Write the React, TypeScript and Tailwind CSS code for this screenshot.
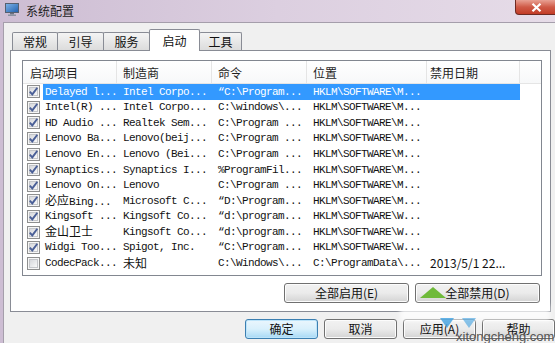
import React from 'react';

type Row = { on: boolean; name: string; maker: string; cmd: string; loc: string; date?: string };

const rows: Row[] = [
  { on: true, name: 'Delayed l...', maker: 'Intel Corpo...', cmd: '“C:\\Program...', loc: 'HKLM\\SOFTWARE\\M...' },
  { on: true, name: 'Intel(R) ...', maker: 'Intel Corpo...', cmd: 'C:\\windows\\...', loc: 'HKLM\\SOFTWARE\\M...' },
  { on: true, name: 'HD Audio ...', maker: 'Realtek Sem...', cmd: 'C:\\Program ...', loc: 'HKLM\\SOFTWARE\\M...' },
  { on: true, name: 'Lenovo Ba...', maker: 'Lenovo(beij...', cmd: 'C:\\Program ...', loc: 'HKLM\\SOFTWARE\\M...' },
  { on: true, name: 'Lenovo En...', maker: 'Lenovo (Bei...', cmd: 'C:\\Program ...', loc: 'HKLM\\SOFTWARE\\M...' },
  { on: true, name: 'Synaptics...', maker: 'Synaptics I...', cmd: '%ProgramFil...', loc: 'HKLM\\SOFTWARE\\M...' },
  { on: true, name: 'Lenovo On...', maker: 'Lenovo', cmd: 'C:\\Program ...', loc: 'HKLM\\SOFTWARE\\M...' },
  { on: true, name: '必应Bing...', maker: 'Microsoft C...', cmd: '“D:\\Program...', loc: 'HKLM\\SOFTWARE\\M...' },
  { on: true, name: 'Kingsoft ...', maker: 'Kingsoft Co...', cmd: '“d:\\program...', loc: 'HKLM\\SOFTWARE\\W...' },
  { on: true, name: '金山卫士', maker: 'Kingsoft Co...', cmd: '“d:\\program...', loc: 'HKLM\\SOFTWARE\\W...' },
  { on: true, name: 'Widgi Too...', maker: 'Spigot, Inc.', cmd: '“C:\\Program...', loc: 'HKLM\\SOFTWARE\\W...' },
  { on: false, name: 'CodecPack...', maker: '未知', cmd: 'C:\\Windows\\...', loc: 'C:\\ProgramData\\...', date: '2013/5/1 22...' },
];

const cjk = "font-['Noto_Sans_CJK_SC',sans-serif]";

// chinese runs get a CJK font at full size, latin stays half-width mono
function Txt({ s }: { s: string }) {
  const parts = s.split(/([\u4e00-\u9fff]+)/).filter(Boolean);
  return (
    <>
      {parts.map((p, i) =>
        /[\u4e00-\u9fff]/.test(p) ? (
          <span key={i} className={`${cjk} text-[12px] tracking-normal`}>{p}</span>
        ) : (
          <span key={i}>{p}</span>
        )
      )}
    </>
  );
}

function Check({ on }: { on: boolean }) {
  return (
    <svg width="13" height="13" viewBox="0 0 13 13">
      <defs>
        <linearGradient id="cb" x1="0" y1="0" x2="1" y2="1">
          <stop offset="0" stopColor="#d4d6da" />
          <stop offset="1" stopColor="#fbfbfb" />
        </linearGradient>
      </defs>
      <rect x="0.5" y="0.5" width="12" height="12" fill="#f6f6f6" stroke="#8e8f8f" />
      <rect x="2.5" y="2.5" width="8" height="8" fill="url(#cb)" stroke="#c4c6ca" />
      {on && <path d="M2.8 6.6 L5.3 9.4 L10.3 2.8" fill="none" stroke="#4a5f97" strokeWidth="1.9" />}
    </svg>
  );
}

function Btn({ label, w, primary }: { label: string; w: string; primary?: boolean }) {
  return (
    <div
      className={`${w} h-[20px] rounded-[3px] border flex items-center justify-center text-[12px] text-[#111] ${cjk} ${
        primary
          ? 'border-[#3c7fb1] bg-gradient-to-b from-[#eaf6fd] via-[#d9f0fc] to-[#a7d9f5] shadow-[inset_0_0_0_1px_#bde4fa]'
          : 'border-[#707070] bg-gradient-to-b from-[#f2f2f2] via-[#ebebeb] to-[#d3d3d3] shadow-[inset_0_0_0_1px_#fcfcfc]'
      }`}
    >
      {label}
    </div>
  );
}

const tabs = [
  { t: '常规', w: 'w-[46px]' },
  { t: '引导', w: 'w-[47px]' },
  { t: '服务', w: 'w-[47px]' },
  { t: '启动', w: 'w-[51px]', on: true },
  { t: '工具', w: 'w-[43px]' },
];

export default function App() {
  return (
    <div className="w-[555px] h-[343px] overflow-hidden relative flex flex-col bg-gradient-to-r from-[#cdbdd3] via-[#dccfe0] to-[#e6dce8]">
      {/* title bar */}
      <div className="h-[22px] shrink-0 flex items-start">
        <svg className="mt-[3px] ml-[5px]" width="14" height="13" viewBox="0 0 14 13">
          <defs>
            <linearGradient id="scr" x1="0" y1="0" x2="1" y2="1">
              <stop offset="0" stopColor="#7fb4e8" />
              <stop offset="1" stopColor="#1f5fae" />
            </linearGradient>
          </defs>
          <rect x="0.5" y="0.5" width="13" height="9" fill="url(#scr)" stroke="#556070" />
          <rect x="5" y="10" width="4" height="1.5" fill="#6a7280" />
          <rect x="3" y="11.5" width="8" height="1.5" fill="#8a92a0" />
        </svg>
        <div className={`ml-[7px] mt-[3px] text-[12px] leading-[16px] text-[#1e1e1e] ${cjk}`}>系统配置</div>
        <div className="ml-auto -mr-[3px] w-[43px] h-[15px] rounded-bl-[4px] border border-t-0 border-[#6e2a22] bg-gradient-to-b from-[#e8a093] via-[#cf5a47] to-[#c23b26] flex items-center justify-center">
          <svg width="11" height="9" viewBox="0 0 11 9">
            <path d="M1.5 0.8 L9.5 8.2 M9.5 0.8 L1.5 8.2" stroke="#fff" strokeWidth="2.2" />
          </svg>
        </div>
      </div>

      {/* body */}
      <div className="flex-1 ml-[3px] bg-[#f0f0f0] border-l border-t border-[#a59eab] flex flex-col">
        <div className="h-[28px] flex items-end pl-[8px] relative z-10">
          {tabs.map((tab, i) =>
            tab.on ? (
              <div
                key={i}
                className={`${tab.w} h-[22px] -ml-px border border-b-0 border-[#898c95] bg-white rounded-t-[2px] flex justify-center pt-[3px] text-[12px] leading-[16px] text-[#111] ${cjk}`}
              >
                {tab.t}
              </div>
            ) : (
              <div
                key={i}
                className={`${tab.w} h-[18px] mb-px ${i > 0 ? '-ml-px' : ''} border border-b-0 border-[#898c95] bg-gradient-to-b from-[#f4f4f4] to-[#dcdcdc] rounded-t-[2px] flex justify-center pt-[1px] text-[12px] leading-[16px] text-[#111] ${cjk}`}
              >
                {tab.t}
              </div>
            )
          )}
        </div>

        <div className="ml-[6px] -mt-px w-[541px] h-[262px] border border-[#898c95] bg-white flex flex-col">
          {/* list */}
          <div className="ml-[11px] mt-[9px] w-[520px] h-[216px] border border-[#828790] bg-white flex flex-col">
            <div className={`h-[23px] flex text-[12px] text-[#1e1e1e] ${cjk} bg-gradient-to-b from-white to-[#f7f8f9] border-b border-[#e5e5e5]`}>
              <div className="w-[94px] pl-[7px] pt-[3px] border-r border-[#e5e5e5]">启动项目</div>
              <div className="w-[95px] pl-[6px] pt-[3px] border-r border-[#e5e5e5]">制造商</div>
              <div className="w-[95px] pl-[6px] pt-[3px] border-r border-[#e5e5e5]">命令</div>
              <div className="w-[120px] pl-[6px] pt-[3px] border-r border-[#e5e5e5]">位置</div>
              <div className="w-[93px] pl-[3px] pt-[3px] border-r border-[#e5e5e5]">禁用日期</div>
              <div className="flex-1" />
            </div>
            {rows.map((r, i) => (
              <div key={i} className="h-[15.6px] flex items-center font-['Liberation_Mono',monospace] text-[11px] tracking-[-0.6px] whitespace-nowrap">
                <div className="w-[20px] pl-[4px] flex items-center">
                  <Check on={r.on} />
                </div>
                <div className={`h-full flex items-center ${i === 0 ? 'bg-[#3399ff] text-white' : 'text-[#111]'}`}>
                  <div className="w-[74px] pl-[2px] overflow-hidden"><Txt s={r.name} /></div>
                  <div className="w-[95px] pl-[6px] overflow-hidden"><Txt s={r.maker} /></div>
                  <div className="w-[95px] pl-[6px] overflow-hidden"><Txt s={r.cmd} /></div>
                  <div className="w-[120px] pl-[6px] overflow-hidden"><Txt s={r.loc} /></div>
                  <div className={`w-[93px] pl-[3px] overflow-hidden ${cjk} text-[12px] tracking-normal`}>{r.date ?? ''}</div>
                </div>
              </div>
            ))}
          </div>

          <div className="mt-[7px] flex justify-end gap-[6px] pr-[10px]">
            <Btn label="全部启用(E)" w="w-[125px]" />
            <Btn label="全部禁用(D)" w="w-[125px]" />
          </div>
        </div>

        <div className="mt-[7px] pl-[241px] flex gap-[6px]">
          <Btn label="确定" w="w-[73px]" primary />
          <Btn label="取消" w="w-[73px]" />
          <Btn label="应用(A)" w="w-[73px]" />
          <Btn label="帮助" w="w-[73px]" />
        </div>
      </div>

      {/* site watermark over the buttons */}
      <svg className="absolute left-[420px] top-[287px]" width="26" height="12" viewBox="0 0 26 12">
        <polygon points="13,0 26,11 0,11" fill="#6fba3a" />
      </svg>
      <div className="absolute left-[400px] top-[305px] w-[150px] h-[16px] bg-white/70 blur-[2px]" />
      <svg className="absolute left-[440px] top-[318px]" width="40" height="12" viewBox="0 0 40 12">
        <polygon points="0,0 14,0 7,10" fill="#3fa0e0" opacity="0.8" />
        <polygon points="22,0 36,0 29,10" fill="#3fa0e0" opacity="0.6" />
      </svg>
      <div className="absolute left-[456px] top-[330px] text-[13px] leading-[13px] text-[#555] font-['Liberation_Sans',sans-serif]">
        xitongcheng.com
      </div>
    </div>
  );
}
